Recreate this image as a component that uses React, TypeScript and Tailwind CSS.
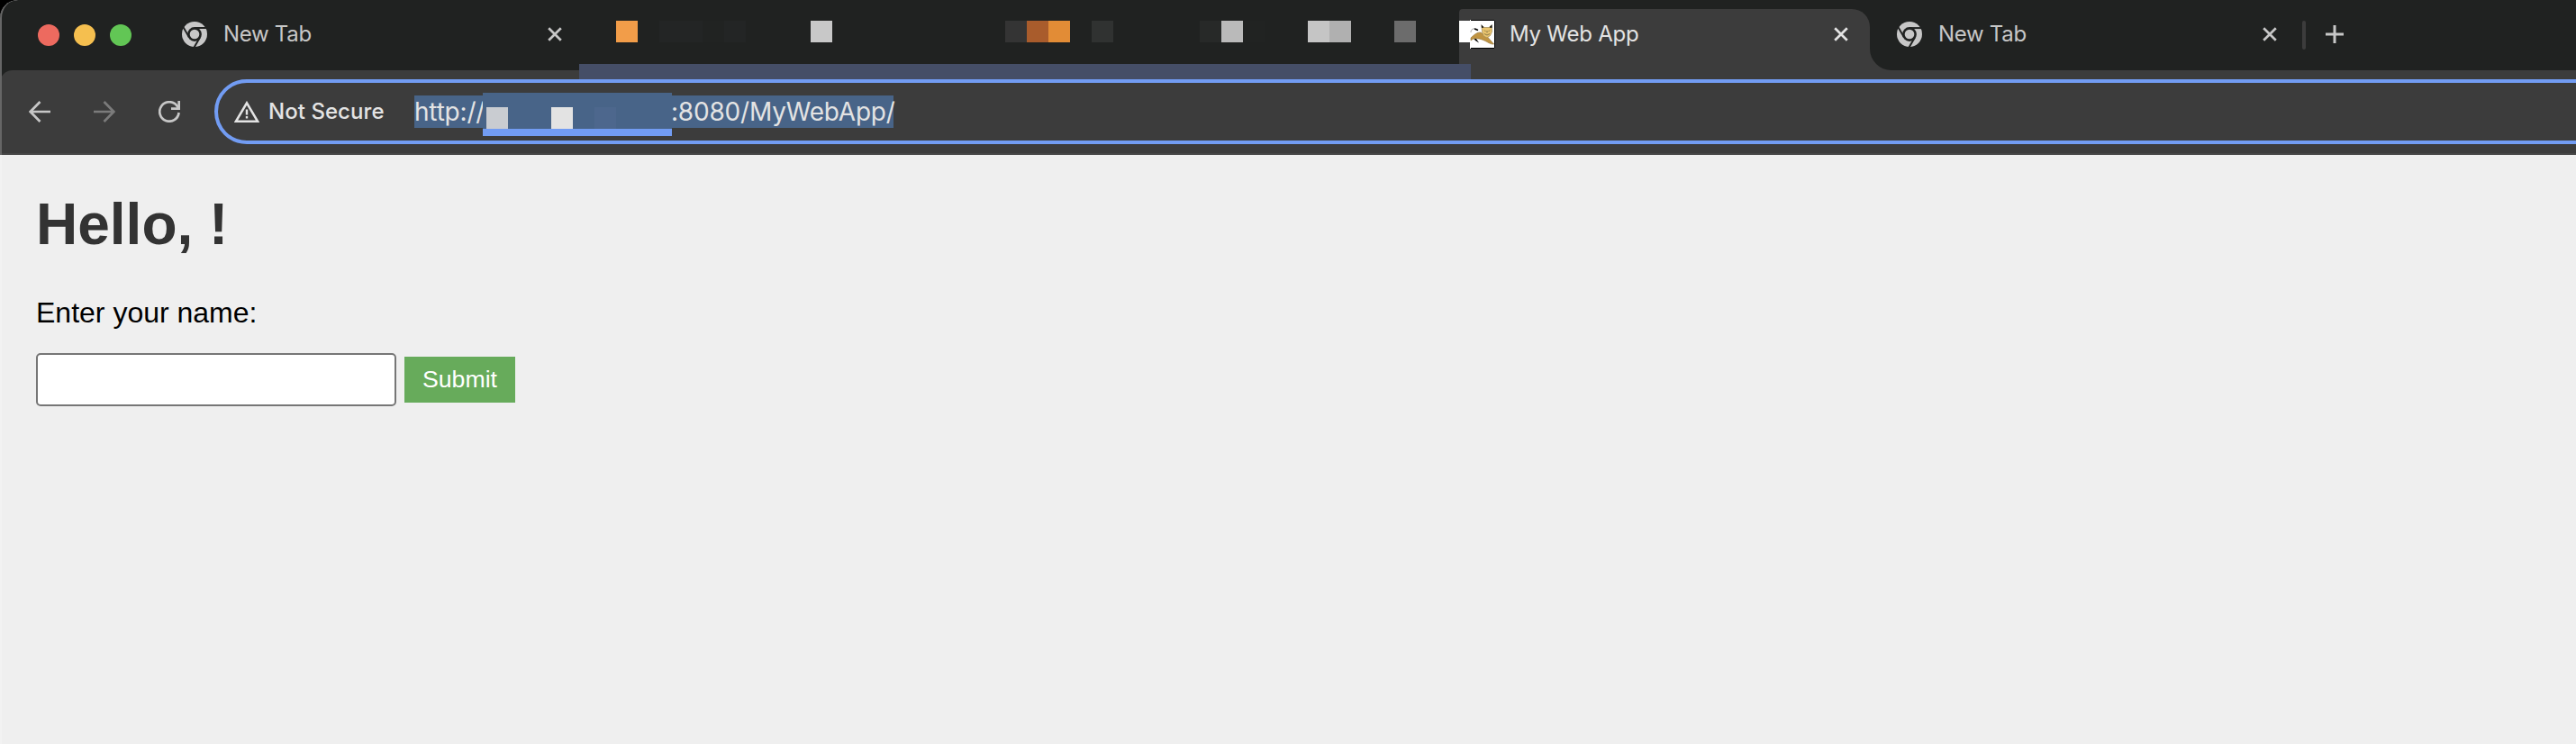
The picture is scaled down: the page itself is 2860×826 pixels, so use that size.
import React from "react";

const TAB_CELLS: Record<number, string> = {
  0: "bg-[#f29d49]",
  2: "bg-[#232525]",
  3: "bg-[#232525]",
  4: "bg-[#212322]",
  5: "bg-[#232525]",
  9: "bg-[#c8c8c8]",
  18: "bg-[#343434]",
  19: "bg-[#a95c2c]",
  20: "bg-[#e28c36]",
  22: "bg-[#303231]",
  27: "bg-[#272928]",
  28: "bg-[#bababa]",
  29: "bg-[#212322]",
  32: "bg-[#c5c5c5]",
  33: "bg-[#b0b0b0]",
  36: "bg-[#6c6c6c]",
};

function ChromeIcon() {
  return (
    <svg className="size-7 shrink-0" viewBox="-14 -14 28 28">
      <circle r="14" fill="#c7c7c7" />
      <circle r="7.9" fill="#202221" />
      {[0, 120, 240].map((angle) => (
        <path key={angle} d="M0 -6.9H14.5" stroke="#202221" strokeWidth="2" transform={`rotate(${angle})`} />
      ))}
      <circle r="5.3" fill="#c7c7c7" />
    </svg>
  );
}

function CloseIcon({ color = "#c7c7c7" }: { color?: string }) {
  return (
    <svg className="size-4 shrink-0" viewBox="0 0 16 16" fill="none" stroke={color} strokeWidth="2.7">
      <path d="M1.2 1.2L14.8 14.8M14.8 1.2L1.2 14.8" />
    </svg>
  );
}

function TomcatIcon() {
  return (
    <svg className="h-8 w-7 shrink-0" viewBox="0 0 28 32">
      <path d="M0 0H28V32H0Z" fill="#fff" />
      <path d="M1 .5H27.5V31.5H1" fill="none" stroke="#000" />
      <path d="M1 14C1 9 7 8.500 9 11.500" fill="none" stroke="#aaa" />
      <path d="M5 10L9 11.500" stroke="#000" strokeWidth="1.500" />
      <path d="M4 20.500L7 21L10 25.500L6 23Z" fill="#000" />
      <path d="M1 20C4 17 8 13.500 12 14L20 19.500L26.500 27C22 27.500 18 23 12 21.500C8 20.500 4 20 1 23Z" fill="#c09442" stroke="#8f7034" strokeWidth=".6" />
      <path d="M13 6.500L16 8.500H21L24 6L24.500 13L22.500 17.500L19 20L15 18L13.500 13Z" fill="#e9c46e" stroke="#a08a55" strokeWidth=".7" />
      <path d="M12.500 5L15.500 8.500L13 9ZM24.500 5L21.500 8.500L24.500 9Z" fill="#111" />
      <path d="M16 11.500L17.500 13M22 11.500L20.500 13M19 12V14.500M16 15.500L19 17L22 15.500" fill="none" stroke="#8a7848" strokeWidth="1" />
    </svg>
  );
}

function TabStrip() {
  return (
    <div className="relative flex h-[78px] bg-[#202221]">
      <div className="flex w-[202px] items-center gap-4 pl-[42px]">
        <span className="size-6 rounded-full bg-[#ed6a5f]" />
        <span className="size-6 rounded-full bg-[#f5bf4f]" />
        <span className="size-6 rounded-full bg-[#62c655]" />
      </div>
      <div className="flex h-[76px] w-[441px] items-center">
        <ChromeIcon />
        <span className="ml-[18px] text-[24px] tracking-[-0.3px] text-[#c7c7c7]">New Tab</span>
        <span className="mr-[19px] ml-auto flex"><CloseIcon /></span>
      </div>
      <div className="flex w-[977px] pt-[23px] pl-[41px]">
        {Array.from({ length: 39 }, (_, i) => (
          <span key={i} className={`size-6 shrink-0 ${TAB_CELLS[i] ?? ""}`} />
        ))}
      </div>
      <div className="relative flex w-[456px] pt-[10px]">
        <div className="flex h-[68px] w-full items-start rounded-tl-[4px] rounded-tr-[20px] bg-[#3c3c3c]">
          <span className="mt-[13px] h-6 w-3 bg-white" />
          <span className="mt-3"><TomcatIcon /></span>
          <span className="mt-[10px] ml-4 text-[24px] leading-9 tracking-[-0.25px] text-[#e3e3e3]">My Web App</span>
          <span className="mt-5 mr-6 ml-auto flex"><CloseIcon color="#e3e3e3" /></span>
        </div>
      </div>
      <div className="flex w-[480px]">
        <svg className="h-6 w-6 shrink-0 self-end" viewBox="0 0 24 24">
          <path d="M0 0A24 24 0 0 0 24 24H0Z" fill="#3c3c3c" />
        </svg>
        <div className="flex h-[76px] flex-1 items-center pl-[6px]">
          <ChromeIcon />
          <span className="ml-[18px] text-[24px] tracking-[-0.3px] text-[#c7c7c7]">New Tab</span>
          <span className="mr-7 ml-auto flex"><CloseIcon /></span>
        </div>
      </div>
      <span className="mt-[23px] h-8 w-1 rounded-sm bg-[#3c3c3c]" />
      <svg className="mt-7 ml-[22px] size-5" viewBox="0 0 20 20">
        <path d="M0 10H20M10 0V20" stroke="#c7c7c7" strokeWidth="3" />
      </svg>
      <div className="absolute top-[71px] left-[643px] h-[17px] w-[990px] bg-[#454e67]" />
    </div>
  );
}

function Toolbar() {
  return (
    <div className="bg-[#202221]">
      <div className="flex h-[94px] overflow-hidden rounded-tl-[14px] border-b-2 border-[#464646] bg-[#3c3c3c] pt-[10px]">
        <div className="flex h-[72px] w-[238px] shrink-0 items-center pl-8">
          <svg className="size-6" viewBox="0 0 24 24" fill="none" stroke="#c7c7c7" strokeWidth="2.700">
            <path d="M24 12H2M12.500 1L1.700 12L12.500 23" />
          </svg>
          <svg className="ml-12 size-6" viewBox="0 0 24 24" fill="none" stroke="#7b7b7b" strokeWidth="2.700">
            <path d="M0 12H22M11.500 1L22.300 12L11.500 23" />
          </svg>
          <svg className="ml-12 size-6" viewBox="0 0 24 24" fill="none" stroke="#c7c7c7" strokeWidth="2.700">
            <path d="M22.600 13A10.700 10.700 0 1 1 20.500 5.500L22.500 8.500" />
            <path d="M22.700 0V8.700H14" />
          </svg>
        </div>
        <div className="flex h-[72px] w-[2700px] shrink-0 items-center rounded-l-full border-4 border-[#729cf3] pl-[18px]">
          <svg className="h-6 w-7 shrink-0" viewBox="0 0 28 24" fill="none" stroke="#e3e3e3">
            <path d="M2 22.700L14 2.400L26 22.700Z" strokeWidth="2.600" />
            <path d="M14 9.500V15.500M14 17V19.500" strokeWidth="2.400" />
          </svg>
          <span className="ml-[10px] w-[162px] text-[24px] font-medium tracking-[0.05px] text-[#e3e3e3]">Not Secure</span>
          <div className="relative flex h-9 w-[532px] bg-[#486488] text-[28px] leading-[37px] text-[#e3e3e3]">
            <span className="w-[76px] min-w-0 shrink-0 whitespace-nowrap tracking-[-0.2px]">http://</span>
            <span className="ml-[209px] whitespace-nowrap tracking-[-0.2px]">:8080/MyWebApp/</span>
            <div className="absolute -top-[3px] left-[76px] flex h-12 w-[210px] items-end border-b-8 border-[#729cf3] bg-[#486488] pl-1">
              <span className="size-6 bg-[#c9ccd1]" />
              <span className="ml-12 size-6 bg-[#e3e3e3]" />
              <span className="ml-6 size-6 bg-[#4d678d]" />
            </div>
          </div>
        </div>
      </div>
    </div>
  );
}

export default function App() {
  return (
    <div className="h-[826px] w-[2860px] overflow-hidden bg-black font-['Inter',sans-serif]">
      <div className="relative flex h-full flex-col overflow-hidden rounded-tl-[20px] bg-[#efefef]">
        <TabStrip />
        <Toolbar />
        <main className="flex-1 border-l-2 border-[#f2f2f2] pt-[40px] pr-10 pl-[38px] font-['Liberation_Sans',Arial,sans-serif]">
          <h1 className="text-[64px] leading-[74px] font-bold text-[#333]">Hello, !</h1>
          <label htmlFor="name" className="mt-[43px] block text-[32px] leading-9 text-black">Enter your name:</label>
          <div className="mt-[27px] flex items-center gap-[9px]">
            <input id="name" className="h-[59px] w-[400px] rounded-[5px] border-2 border-[#767676] bg-white" />
            <button className="h-[51px] w-[123px] bg-[#67ab5b] pb-[2px] text-[26.67px] text-white">Submit</button>
          </div>
        </main>
        <div className="pointer-events-none absolute top-0 left-0 h-[172px] w-full rounded-tl-[20px] border-l-2 border-[#666]" />
      </div>
    </div>
  );
}
